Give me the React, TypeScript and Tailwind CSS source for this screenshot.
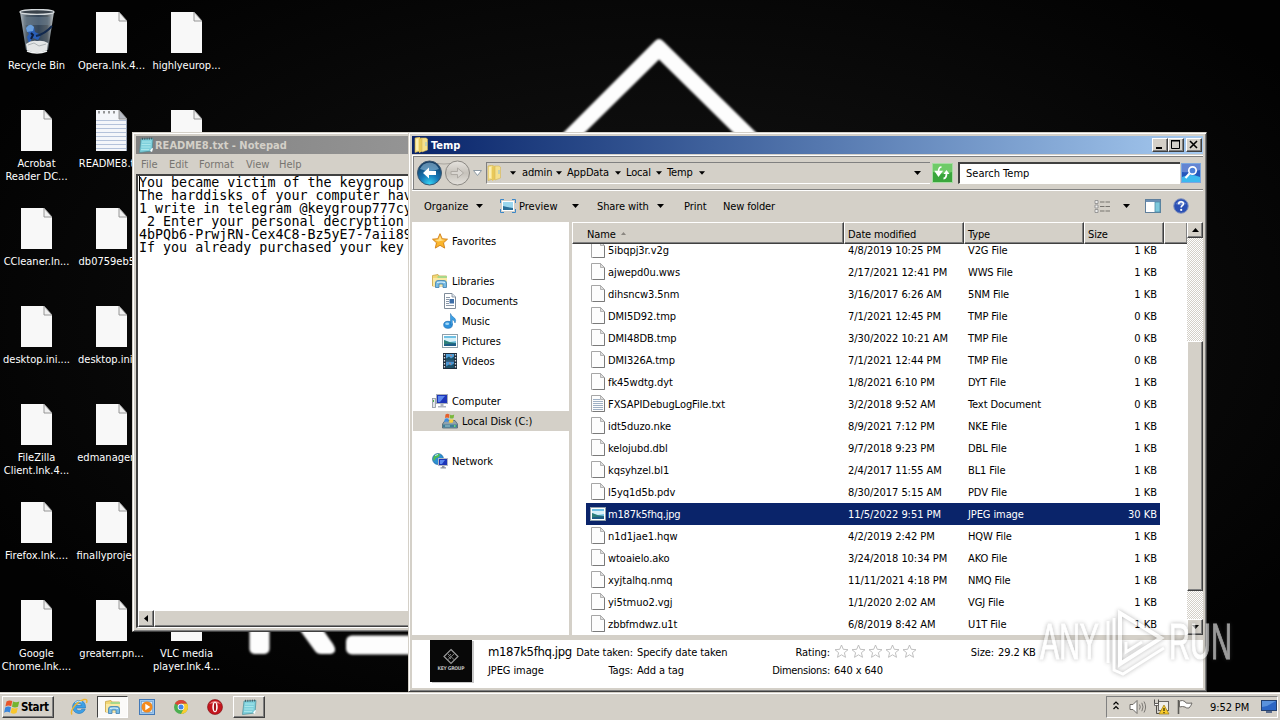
import type { ReactNode } from "react";

const raised =
  "border border-t-white border-l-white border-r-[#404040] border-b-[#404040] shadow-[inset_-1px_-1px_0_#808080]";

/* ---------- icons ---------- */

const PageIcon = ({ lined = false }: { lined?: boolean }) => (
  <svg width="31" height="41" viewBox="0 0 31 41" className="block shrink-0">
    <path d="M0 0H23L31 9V41H0Z" fill={lined ? "#f4f6fa" : "#f8f8f8"} />
    {lined && (
      <g>
        {[10, 14, 18, 22, 26, 30, 34, 38].map((y) => (
          <path key={y} d={`M0 ${y + 0.5}H31`} stroke="#b4c2da" />
        ))}
        {[3, 8, 13, 18].map((x) => (
          <path key={x} d={`M${x} 1v2.5`} stroke="#777" strokeWidth="1.5" />
        ))}
        <path d="M30.5 9V41" stroke="#9aa4b4" />
      </g>
    )}
    <path d="M23 0V9H31Z" fill={lined ? "#b8bcc4" : "#f0f0f0"} stroke="#8c8c8c" strokeWidth=".9" />
  </svg>
);

const BinIcon = () => (
  <svg width="36" height="45" viewBox="0 0 36 45" className="-mt-[3px] mb-[-1px] block shrink-0">
    <defs>
      <linearGradient id="bin" x1="0" x2="1">
        <stop offset="0" stopColor="#b4bdc4" />
        <stop offset=".2" stopColor="#52606c" />
        <stop offset=".55" stopColor="#34465a" />
        <stop offset=".8" stopColor="#545e66" />
        <stop offset="1" stopColor="#c2c8cc" />
      </linearGradient>
    </defs>
    <path d="M1 3L7 41Q18 47 29 41L35 3Z" fill="url(#bin)" />
    <path d="M5 8H31L30 16H6Z" fill="#6f8496" opacity=".5" />
    <ellipse cx="18" cy="3" rx="17" ry="2.4" fill="#39424b" stroke="#d5dadd" strokeWidth="1.4" />
    <path d="M7 20q3-5 8-2l1 5 6 3-3 5-5-2-4 5-2-6 2-3z" fill="#2a5fb8" />
    <path d="M7 19q4-6 8-1l-1 4-6 1z" fill="#6a9fdc" />
    <path d="M17 27q9-2 16-10" stroke="#12294e" strokeWidth="2" fill="none" />
    <path d="M12 24l2 2-2 4" stroke="#0f1d3a" strokeWidth="2" fill="none" />
    <path d="M7 35q5-4 11-3 6-1 11 2l-1 7q-10 5-20 0z" fill="#e4e6e6" />
    <path d="M9 36l6-2 5 3 7-2" stroke="#aeb4b6" fill="none" />
    <path d="M8 42q10 4 20 0" stroke="#f2f4f4" strokeWidth="1.5" fill="none" />
  </svg>
);

const SmallPage = ({ lined = false }: { lined?: boolean }) => (
  <svg width="14" height="17" viewBox="0 0 14 17" className="block shrink-0">
    <path d="M.5 .5H9.5L13.5 4.5V16.5H.5Z" fill="#fdfdfd" stroke="#a6a6a6" />
    <path d="M2 16.5H13.5V5" stroke="#7a7a7a" fill="none" />
    <path d="M9.5 .5V4.5H13.5Z" fill="#ddd" stroke="#a5a5a5" strokeWidth=".8" />
    {lined && <path d="M2 4.5H9M2 6.5H12M2 8.5H12M2 10.5H12M2 12.5H12M2 14.5H12" stroke="#9fb0c4" />}
  </svg>
);

const PictureIcon = () => (
  <svg width="16" height="14" viewBox="0 0 16 14" className="block shrink-0">
    <rect x=".5" y=".5" width="15" height="13" fill="#fff" stroke="#8fa0ab" />
    <rect x="2" y="2" width="12" height="10" fill="#6fc0e4" />
    <path d="M2 4h12v3l-6 1-6-2z" fill="#d8f1f8" />
    <path d="M2 6l5 2 7 1v3H2z" fill="#2d7f78" />
    <path d="M2 10.500q6-1.500 12-1v2.500H2z" fill="#1c5d88" />
  </svg>
);

const NotepadIcon = ({ size = 16 }: { size?: number }) => (
  <svg width={size} height={size} viewBox="0 0 16 16" className="block shrink-0">
    <path d="M3 2L15 1.5 14 14 1.5 15.5Z" fill="#7fd0dc" stroke="#4a8c98" strokeWidth=".7" />
    <path d="M4 5h9M3.6 7.5h9M3.4 10h9M3 12.5h8" stroke="#a8e6ea" />
    <path d="M4.5 .8v2M6.8 .8v2M9.1 .7v2M11.4 .6v2M13.6 .5v2" stroke="#3f5158" strokeWidth=".9" />
    <path d="M12 14l2-3 1 .5-1 3.5z" fill="#fff" />
  </svg>
);

const FolderIcon = () => (
  <svg width="14" height="16" viewBox="0 0 14 16" className="block shrink-0">
    <path d="M1 1l5-1v14l-5 1.500z" fill="#f7e28a" stroke="#c9a94a" strokeWidth=".6" />
    <path d="M5 2l3-1.500v14L5 16z" fill="#e9c95a" />
    <path d="M8 1h4l1.500 1v11L8 15z" fill="#f5e08c" stroke="#d4b558" strokeWidth=".6" />
    <path d="M3 2v11" stroke="#fffbe0" />
    <path d="M12 5v4" stroke="#8dc3dc" />
  </svg>
);

const LibraryIcon = ({ size = 16 }: { size?: number }) => (
  <svg width={size} height={size} viewBox="0 0 16 16" className="block shrink-0">
    <path d="M.5 2.500L6 1.500 7 3H14.500V13H.5Z" fill="#f3d774" stroke="#c8a548" strokeWidth=".8" />
    <path d="M5.500 3h9.500v3H5.500z" fill="#a8d88a" />
    <path d="M1 5h14v8H1z" fill="#fae9a4" />
    <path d="M3.500 14.500V10q0-2.500 2.500-2.500h6q2.500 0 2.500 2.500v4.500H11V11H7v3.500Z" fill="#79bce4" stroke="#3e7fae" strokeWidth=".8" />
    <path d="M5 9.500q4-1 8 0" stroke="#d9f1fc" fill="none" />
  </svg>
);

const StarIcon = () => (
  <svg width="16" height="16" viewBox="0 0 16 16" className="block">
    <path d="M8 .7l2.200 5 5.300.5-4 3.600 1.200 5.300L8 12.300l-4.700 2.800 1.200-5.300-4-3.600 5.300-.5z" fill="#fbb62c" stroke="#cf7d16" strokeWidth=".9" />
    <path d="M8 2.700l1.600 3.800 3.600.4-7 1.600-3.500-1.600 3.700-.4z" fill="#ffe08a" />
  </svg>
);

const DocIcon = () => (
  <svg width="16" height="16" viewBox="0 0 16 16" className="block">
    <path d="M2.500 .5H10L13.500 4V15.500H2.500Z" fill="#fff" stroke="#7f8b99" />
    <path d="M10 .5V4h3.500" fill="#dde4ec" stroke="#7f8b99" strokeWidth=".8" />
    <path d="M4 4.500h4M4 6.500h3M4 8.500h3M4 10.500h3M4 12.500h8" stroke="#8b98a8" />
    <rect x="7.500" y="6" width="4.500" height="4.500" fill="#3c6ea8" />
  </svg>
);

const MusicIcon = () => (
  <svg width="16" height="16" viewBox="0 0 16 16" className="block">
    <ellipse cx="6" cy="11.800" rx="4.300" ry="3.500" fill="#2f93dd" stroke="#1d6cb0" strokeWidth=".7" />
    <path d="M8.500 12V.5q1 3 4 4.500 2 2 .5 5-.5-3-2.700-3.500V12z" fill="#3ba0e6" stroke="#1d6cb0" strokeWidth=".5" />
    <ellipse cx="5.200" cy="10.800" rx="2" ry="1.200" fill="#a4d8f7" />
  </svg>
);

const VideoIcon = () => (
  <svg width="16" height="16" viewBox="0 0 16 16" className="block">
    <rect x="1" y="0" width="14" height="16" fill="#1f2d3c" />
    <path d="M2.500 1v15M13.500 1v15" stroke="#d8dee4" strokeWidth="1.300" strokeDasharray="1.500 1.500" />
    <rect x="4" y="1" width="8" height="6.500" fill="#4f9fd8" />
    <rect x="4" y="8.500" width="8" height="6.500" fill="#4a94d0" />
    <path d="M4 5.500l3-2 2 2 3-2v4H4zM4 13.500l3-2 2 1 3-2v4.500H4z" fill="#1c5068" />
    <path d="M8 2l2 1M7 10l2 1" stroke="#d47d6a" />
  </svg>
);

const ComputerIcon = () => (
  <svg width="16" height="16" viewBox="0 0 16 16" className="block">
    <rect x=".5" y="5.500" width="3" height="9" fill="#e3e6ea" stroke="#8b939c" strokeWidth=".8" />
    <path d="M1.500 7v2" stroke="#4fb04a" />
    <rect x="4.500" y="1.500" width="11" height="9" fill="#1d35b8" stroke="#aab0bb" />
    <path d="M6 3h7l-5 6H6z" fill="#5b86ee" />
    <path d="M8.500 11h3v2h2.500v1.500H6V13h2.500z" fill="#aeb4bd" />
  </svg>
);

const DiskIcon = () => (
  <svg width="16" height="16" viewBox="0 0 16 16" className="block">
    <path d="M.5 11L3 7.500h10l2.500 3.500v4H.5z" fill="#8fa2ae" stroke="#4c6472" strokeWidth=".8" />
    <path d="M1 11.500h14v3H1z" fill="#3f7f96" />
    <path d="M3 13h5" stroke="#c9dfe6" strokeWidth=".8" />
    <path d="M12 13h1.500" stroke="#7df26f" strokeWidth="1.500" />
    <path d="M3.500 1.500q2-1.500 4 0l-.5 3.500q-2-1-4 0z" fill="#e5602c" />
    <path d="M8.200 1.700q2 1 4-.3l-.6 3.600q-2 1-4 0z" fill="#7ab83c" />
    <path d="M2.800 5.700q2-1 4 0l-.5 3.300q-2-1-4 0z" fill="#3c8ee0" />
    <path d="M7.500 5.900q2 1 4 0l-.5 3.300q-2 1-4 0z" fill="#f8ce38" />
  </svg>
);

const NetworkIcon = () => (
  <svg width="16" height="16" viewBox="0 0 16 16" className="block">
    <circle cx="6" cy="6" r="5.500" fill="#2d8fd2" stroke="#1a5e97" strokeWidth=".6" />
    <path d="M2 3q3-3 6-2l-1 3-3 1-2 3-1-2zM7 7l3-1v4l-3 1z" fill="#4fbb55" />
    <path d="M3 2.500l3-1" stroke="#c6f0fc" />
    <rect x="6.500" y="5.500" width="9" height="7" fill="#1d35b8" stroke="#b5bac4" />
    <path d="M8 7h5l-3 4H8z" fill="#5d89f0" />
    <path d="M10 13h2.500v1.200H14v1.300H8.500v-1.300H10z" fill="#8d949e" />
  </svg>
);

const WindowsFlag = () => (
  <svg width="16" height="16" viewBox="0 0 16 16" className="block shrink-0">
    <path d="M2.500 2.500q3-2 5.800-.4L7.200 7.300q-2.800-1.500-5.800.2z" fill="#e8562a" />
    <path d="M9 2.500q3 1.500 6.300 0L14 7.700q-3 1.600-6 0z" fill="#74b42e" />
    <path d="M1.200 8.500q3-1.700 5.800-.2L5.900 13.500q-2.800-1.500-5.800.2z" fill="#3a86dc" />
    <path d="M7.800 8.700q3 1.600 6 0l-1.200 5.100q-3 1.700-6 0z" fill="#f8c62c" />
  </svg>
);

const IeIcon = () => (
  <svg width="18" height="18" viewBox="0 0 18 18" className="block">
    <path d="M9 2.500a6.500 6.500 0 1 0 6.200 8.700h-3.400q-1 1.600-2.800 1.600-2.600 0-2.800-2.800h9.300Q15.700 2.500 9 2.500zM6.300 7.500q.5-2.200 2.700-2.200t2.600 2.200z" fill="#3da0e6" stroke="#1e74ba" strokeWidth=".6" />
    <path d="M2 16.500C-.5 13 6 4 14 1.500q4-.8 2.500 3.500" fill="none" stroke="#efb52f" strokeWidth="1.400" />
    <path d="M5 4.500Q8.500 2 12 4" stroke="#bfe5fb" fill="none" />
  </svg>
);

const MediaIcon = () => (
  <svg width="16" height="16" viewBox="0 0 16 16" className="block">
    <rect x=".5" y=".5" width="15" height="15" fill="#9cc6ec" stroke="#4279b8" />
    <rect x="2.500" y="2.500" width="11" height="11" fill="#d5e8f8" stroke="#6fa0d2" strokeWidth=".7" />
    <circle cx="8" cy="8" r="5.500" fill="#f48a1c" />
    <path d="M6.300 4.800v6.400L11.300 8z" fill="#fff" />
  </svg>
);

const ChromeIcon = () => (
  <svg width="14" height="14" viewBox="0 0 14 14" className="block">
    <circle cx="7" cy="7" r="7" fill="#4caf50" />
    <path d="M7 7L.9 3.600A7 7 0 0 1 13.200 3.800H7z" fill="#dc4437" />
    <path d="M7 3.800h6.200A7 7 0 0 1 7 14L9.800 8.500z" fill="#fbcc2f" />
    <circle cx="7" cy="7" r="3.300" fill="#fff" />
    <circle cx="7" cy="7" r="2.500" fill="#4285e8" />
  </svg>
);

const OperaIcon = () => (
  <svg width="16" height="16" viewBox="0 0 16 16" className="block">
    <circle cx="8" cy="8" r="7.500" fill="#c4161e" stroke="#7c0d12" strokeWidth=".6" />
    <path d="M2 5q6-6 12 0-6-2-12 0z" fill="#ec8a8a" />
    <ellipse cx="8" cy="8" rx="2.700" ry="5.300" fill="#fff" />
    <ellipse cx="8" cy="8" rx="1.100" ry="4.300" fill="#a3141a" />
  </svg>
);

const Down = ({ w = 7 }: { w?: number }) => (
  <svg width={w} height="4" viewBox="0 0 7 4" className="block shrink-0">
    <path d="M0 0H7L3.500 4Z" fill="#000" />
  </svg>
);

/* ---------- desktop ---------- */

type Shortcut = { label: string[]; kind?: "bin" | "note" } | null;

const shortcuts: Shortcut[] = [
  { label: ["Recycle Bin"], kind: "bin" }, { label: ["Opera.lnk.4..."] }, { label: ["highlyeurop..."] },
  { label: ["Acrobat", "Reader DC..."] }, { label: ["README8.txt"], kind: "note" }, { label: [] },
  { label: ["CCleaner.ln..."] }, { label: ["db0759eb5..."] }, null,
  { label: ["desktop.ini...."] }, { label: ["desktop.ini...."] }, null,
  { label: ["FileZilla", "Client.lnk.4..."] }, { label: ["edmanager...."] }, null,
  { label: ["Firefox.lnk...."] }, { label: ["finallyprojec..."] }, null,
  { label: ["Google", "Chrome.lnk...."] }, { label: ["greaterr.pn..."] }, { label: ["VLC media", "player.lnk.4..."] },
];

const Wallpaper = () => (
  <svg width="1280" height="720" className="absolute inset-0">
    <defs>
      <radialGradient id="wall" cx=".52" cy=".45" r=".6">
        <stop offset="0" stopColor="#131313" />
        <stop offset=".45" stopColor="#0d0d0d" />
        <stop offset="1" stopColor="#020202" />
      </radialGradient>
      <filter id="soft"><feGaussianBlur stdDeviation=".8" /></filter>
    </defs>
    <rect width="1280" height="720" fill="url(#wall)" />
    <g filter="url(#soft)" fill="#fdfdfd">
      <path d="M542 154L655 41Q659 37 663 41L778 154H755L659 59.500 563 154Z" />
      <rect x="249.500" y="600" width="20" height="54" rx="5" />
      <path d="M278 600L315 651Q317 654 321 654H331Q338 652 333 644L302 600Z" />
      <rect x="346" y="635.500" width="90" height="19" rx="6" />
    </g>
  </svg>
);

const Desktop = () => (
  <div className="absolute top-0 -left-[1px] grid auto-rows-[98px] grid-cols-[75px_75px_75px] text-white">
    {shortcuts.map((s, i) => (
      <div key={i} className="flex flex-col items-center pt-[12px]">
        {s && (
          <>
            {s.kind === "bin" ? <BinIcon /> : <PageIcon lined={s.kind === "note"} />}
            <div className="mt-[6px] text-center whitespace-nowrap">
              {s.label.map((l) => <div key={l}>{l}</div>)}
            </div>
          </>
        )}
      </div>
    ))}
  </div>
);

/* ---------- windows ---------- */

const Frame = ({ place, children }: { place: string; children: ReactNode }) => (
  <div className={`absolute flex flex-col border border-t-[#d4d0c8] border-l-[#d4d0c8] border-r-[#404040] border-b-[#404040] bg-[#d4d0c8] p-[3px] shadow-[inset_1px_1px_0_#fff,inset_-1px_-1px_0_#808080] ${place}`}>
    {children}
  </div>
);

const noteLines = [
  "You became victim of the keygroup ",
  "The harddisks of your computer have",
  "1 write in telegram @keygroup777cyber",
  " 2 Enter your personal decryption ",
  "4bPQb6-PrwjRN-Cex4C8-Bz5yE7-7aii89",
  "If you already purchased your key ",
];

const Notepad = () => (
  <Frame place="left-[132px] top-[132px] h-[500px] w-[700px]">
    <div className="flex h-[18px] shrink-0 items-center gap-[1px] bg-linear-to-r from-[#808080] to-[#b4b4b4] pl-[2px] font-bold text-[#d4d0c8]">
      <NotepadIcon />
      README8.txt - Notepad
    </div>
    <div className="flex h-[20px] shrink-0 items-center pl-[5px] text-[#777571]">
      <span className="w-[28px]">File</span>
      <span className="w-[30px]">Edit</span>
      <span className="w-[47px]">Format</span>
      <span className="w-[33px]">View</span>
      <span>Help</span>
    </div>
    <div className="flex min-h-0 flex-1 flex-col border-t-2 border-l-2 border-b border-[#404040] border-b-white bg-white">
      <div className="flex min-h-0 flex-1 overflow-hidden pl-[1px] font-['DejaVu_Sans_Mono',monospace] text-[13.33px] leading-[13px] whitespace-pre text-black">
        <div className="-mr-px h-[15px] w-px shrink-0 bg-black" />
        <div>{noteLines.map((l) => <div key={l}>{l}</div>)}</div>
      </div>
      <div className="flex h-[17px] shrink-0 bg-[#d4d0c8]">
        <div className={`flex w-[16px] items-center justify-center bg-[#d4d0c8] ${raised}`}>
          <svg width="4" height="7"><path d="M4 0V7L0 3.500Z" /></svg>
        </div>
        <div className={`w-[600px] bg-[#d4d0c8] ${raised}`} />
      </div>
    </div>
  </Frame>
);

const files = [
  ["5ibqpj3r.v2g", "4/8/2019 10:25 PM", "V2G File", "1 KB"],
  ["ajwepd0u.wws", "2/17/2021 12:41 PM", "WWS File", "1 KB"],
  ["dihsncw3.5nm", "3/16/2017 6:26 AM", "5NM File", "1 KB"],
  ["DMI5D92.tmp", "7/1/2021 12:45 PM", "TMP File", "0 KB"],
  ["DMI48DB.tmp", "3/30/2022 10:21 AM", "TMP File", "0 KB"],
  ["DMI326A.tmp", "7/1/2021 12:44 PM", "TMP File", "0 KB"],
  ["fk45wdtg.dyt", "1/8/2021 6:10 PM", "DYT File", "1 KB"],
  ["FXSAPIDebugLogFile.txt", "3/2/2018 9:52 AM", "Text Document", "0 KB"],
  ["idt5duzo.nke", "8/9/2021 7:12 PM", "NKE File", "1 KB"],
  ["kelojubd.dbl", "9/7/2018 9:23 PM", "DBL File", "1 KB"],
  ["kqsyhzel.bl1", "2/4/2017 11:55 AM", "BL1 File", "1 KB"],
  ["l5yq1d5b.pdv", "8/30/2017 5:15 AM", "PDV File", "1 KB"],
  ["m187k5fhq.jpg", "11/5/2022 9:51 PM", "JPEG image", "30 KB"],
  ["n1d1jae1.hqw", "4/2/2019 2:42 PM", "HQW File", "1 KB"],
  ["wtoaielo.ako", "3/24/2018 10:34 PM", "AKO File", "1 KB"],
  ["xyjtalhq.nmq", "11/11/2021 4:18 PM", "NMQ File", "1 KB"],
  ["yi5tmuo2.vgj", "1/1/2020 2:02 AM", "VGJ File", "1 KB"],
  ["zbbfmdwz.u1t", "6/8/2019 8:42 AM", "U1T File", "1 KB"],
];

const NavItem = ({ icon, text, child, active }: { icon: ReactNode; text: string; child?: boolean; active?: boolean }) => (
  <div className={`ml-[1px] flex h-[20px] items-center gap-[4px] tracking-[-0.05px] ${child ? "pl-[29px]" : "pl-[19px]"} ${active ? "bg-[#d4d0c8]" : ""}`}>
    {icon}
    {text}
  </div>
);

const Column = ({ text, w, sorted }: { text: string; w: string; sorted?: boolean }) => (
  <div className={`flex h-[22px] shrink-0 items-center gap-[5px] bg-[#d4d0c8] pt-[2px] tracking-[-0.15px] ${raised} ${w}`}>
    {text}
    {sorted && <svg width="5" height="3" className="mb-[2px]"><path d="M2.500 0L5 3H0Z" fill="#8a8680" /></svg>}
  </div>
);

const TitleButton = ({ children }: { children: ReactNode }) => (
  <div className={`h-[14px] w-[16px] bg-[#d4d0c8] ${raised}`}>
    <svg width="14" height="12" className="block" stroke="#000" fill="none">{children}</svg>
  </div>
);

const Crumb = ({ text, w }: { text: string; w: string }) => (
  <div className={`flex shrink-0 items-center justify-between tracking-[-0.15px] ${w}`}>
    <span>{text}</span>
    <Down w={6} />
  </div>
);

const AddressBand = () => (
  <div className="flex h-[35px] shrink-0 items-center border-t border-l border-t-white border-l-white border-b border-b-[#808080] shadow-[inset_1px_1px_0_#808080,0_1px_0_#fff]">
    <svg width="70" height="28" viewBox="0 0 70 28" className="ml-[3px] block shrink-0">
      <defs>
        <radialGradient id="back" cx=".5" cy=".95" r=".9">
          <stop offset="0" stopColor="#35d3f4" />
          <stop offset=".45" stopColor="#1676b4" />
          <stop offset="1" stopColor="#12395f" />
        </radialGradient>
        <linearGradient id="fwd" x2="0" y2="1">
          <stop offset="0" stopColor="#e6e3de" />
          <stop offset=".5" stopColor="#c6c2bb" />
          <stop offset="1" stopColor="#e4e1dc" />
        </linearGradient>
      </defs>
      <path d="M14 3Q28 7 42 3" stroke="#aaa69f" fill="none" />
      <circle cx="13.500" cy="14" r="12" fill="url(#back)" stroke="#3b5670" />
      <path d="M4 10Q7 3.500 13.500 3.500T23 10Q14 14 4 10z" fill="#9fc8e4" opacity=".55" />
      <path d="M7 14L13 8.500V12H20V16H13V19.500Z" fill="#fff" />
      <circle cx="41.500" cy="14" r="12" fill="url(#fwd)" stroke="#8b8883" />
      <path d="M35 12.500H41.500V9L47.500 14 41.500 19V15.500H35Z" fill="#d9d6d1" stroke="#aeaaa4" />
      <path d="M57.500 11.500H65.500L61.500 16.500Z" fill="#fff" stroke="#8d9aa4" />
    </svg>
    <div className="flex h-[22px] w-[444px] shrink-0 items-center border-t border-l border-b border-[#808080] border-b-white">
      <FolderIcon />
      <div className="flex w-[16px] shrink-0 justify-end pr-px"><Down w={6} /></div>
      <div className="ml-[5px] flex gap-[5px]">
        <Crumb text="admin" w="w-[40px]" />
        <Crumb text="AppData" w="w-[54px]" />
        <Crumb text="Local" w="w-[36px]" />
        <Crumb text="Temp" w="w-[38px]" />
      </div>
      <div className="mr-[9px] ml-auto"><Down /></div>
    </div>
    <svg width="21" height="20" viewBox="0 0 21 20" className="ml-[2px] block shrink-0">
      <rect x=".5" y=".5" width="20" height="19" fill="#3aa63c" stroke="#a6dca2" />
      <path d="M1 1h19v8Q10 12 1 9z" fill="#6fcb68" />
      <path d="M9.500 4Q6.500 4 6.500 9M3.800 8.500L6.500 12.500 9.500 8.500z" fill="none" stroke="#fff" strokeWidth="1.600" />
      <path d="M4 8.500h5.500L6.700 12zM11.500 11h6L14.500 7z" fill="#fff" />
      <path d="M14.500 10Q14.500 15.500 11.500 15.500" fill="none" stroke="#fff" strokeWidth="1.800" />
    </svg>
    <div className="ml-[5px] flex h-[22px] w-[222px] shrink-0 items-center border-t-2 border-l-2 border-b border-[#404040] border-b-white bg-white pl-[6px]">
      Search Temp
    </div>
    <svg width="20" height="20" viewBox="0 0 20 20" className="ml-[1px] block shrink-0">
      <rect x=".5" y=".5" width="19" height="19" fill="#2457bc" stroke="#7ba6de" />
      <path d="M1 14Q10 10 19 14V19H1z" fill="#3cb9ee" />
      <path d="M1 1h18v6Q10 10 1 9z" fill="#6485d2" />
      <circle cx="11.500" cy="7.500" r="3.700" fill="#4b7fd8" stroke="#fff" strokeWidth="1.700" />
      <path d="M8.500 10.500L4.500 15" stroke="#fff" strokeWidth="2.200" />
    </svg>
  </div>
);

const CommandBar = () => (
  <div className="flex h-[32px] shrink-0 items-center pl-[12px]">
    <span className="w-[52px]">Organize</span>
    <div className="w-[24px]"><Down /></div>
    <svg width="16" height="14" viewBox="0 0 16 14" className="mr-[3px] block">
      <path d="M.5 4V.5H4M12 .5h3.500V4M15.500 10v3.500H12M4 13.500H.5V10" fill="none" stroke="#3b87c8" />
      <rect x="2.500" y="2.500" width="11" height="9" fill="#9bd7ee" stroke="#fff" />
      <path d="M3 7l4 1 6 1v2H3z" fill="#2b6f98" />
    </svg>
    <span className="w-[53px]">Preview</span>
    <div className="w-[25px]"><Down /></div>
    <span className="w-[60px] tracking-[-0.1px]">Share with</span>
    <div className="w-[27px]"><Down /></div>
    <span className="w-[39px]">Print</span>
    <span className="tracking-[-0.15px]">New folder</span>
    <div className="mr-[14px] ml-auto flex items-center">
      <svg width="16" height="13" viewBox="0 0 16 13">
        <path d="M1 .5h3v3H1zM1 5h3v3H1zM1 9.500h3v3H1z" fill="#eee" stroke="#888" strokeWidth=".8" />
        <path d="M6 2h4.500M11.500 2H16M6 6.500h4.500M11.500 6.500H16M6 11h4.500M11.500 11H16" stroke="#77746f" />
      </svg>
      <div className="mr-[15px] ml-[13px]"><Down /></div>
      <svg width="16" height="14" viewBox="0 0 16 14">
        <rect x=".5" y=".5" width="15" height="13" fill="#fff" stroke="#5f7f9c" />
        <path d="M1 2h14" stroke="#6c8fb4" strokeWidth="2" />
        <rect x="10" y="3" width="5" height="10" fill="#7ec8dc" stroke="#4f8ca8" strokeWidth=".8" />
      </svg>
      <svg width="16" height="16" viewBox="0 0 16 16" className="ml-[12px]">
        <circle cx="8" cy="8" r="7.300" fill="#2b50b4" stroke="#8796bd" />
        <path d="M2.500 6Q8-1 13.500 6 8 8 2.500 6z" fill="#6482cc" />
        <path d="M5.700 6.200q0-2.400 2.400-2.400t2.300 2q0 1.200-1.300 1.900-.9.500-.9 1.700" stroke="#fff" strokeWidth="1.600" fill="none" />
        <circle cx="8.200" cy="11.900" r="1.100" fill="#fff" />
      </svg>
    </div>
  </div>
);

const Explorer = () => (
  <Frame place="left-[408px] top-[132px] h-[560px] w-[799px]">
    <div className="flex h-[18px] shrink-0 items-center bg-linear-to-r from-[#0a246a] to-[#a6caf0] pr-[1px] pl-[2px] font-bold text-white">
      <FolderIcon />
      <span className="ml-[3px]">Temp</span>
      <div className="ml-auto flex">
        <TitleButton><path d="M3 9h6" strokeWidth="2" /></TitleButton>
        <TitleButton><path d="M2.500 2v7.500h8V2M2 2h9" /><path d="M2 1.500h9" /></TitleButton>
        <div className="ml-[2px]">
          <TitleButton><path d="M3 2l7 7M10 2l-7 7" strokeWidth="1.600" /></TitleButton>
        </div>
      </div>
    </div>
    <div className="h-px shrink-0" />
    <AddressBand />
    <CommandBar />
    <div className="flex h-[413px] shrink-0">
      <div className="w-[157px] shrink-0 bg-white pt-[9px]">
        <NavItem icon={<StarIcon />} text="Favorites" />
        <div className="h-[20px]" />
        <NavItem icon={<LibraryIcon />} text="Libraries" />
        <NavItem child icon={<DocIcon />} text="Documents" />
        <NavItem child icon={<MusicIcon />} text="Music" />
        <NavItem child icon={<PictureIcon />} text="Pictures" />
        <NavItem child icon={<VideoIcon />} text="Videos" />
        <div className="h-[20px]" />
        <NavItem icon={<ComputerIcon />} text="Computer" />
        <NavItem child active icon={<DiskIcon />} text="Local Disk (C:)" />
        <div className="h-[20px]" />
        <NavItem icon={<NetworkIcon />} text="Network" />
      </div>
      <div className="w-[3px] shrink-0 bg-[#d4d0c8]" />
      <div className="flex min-w-0 flex-1 flex-col overflow-hidden bg-white">
        <div className="flex h-[22px] shrink-0">
          <Column text="Name" w="w-[272px] pl-[14px]" sorted />
          <Column text="Date modified" w="w-[120px] pl-[3px]" />
          <Column text="Type" w="w-[120px] pl-[3px]" />
          <Column text="Size" w="w-[80px] pl-[3px]" />
          <Column text="" w="w-[24px]" />
        </div>
        <div className="flex min-h-0 flex-1 flex-col justify-end overflow-hidden">
          {files.map(([name, date, type, size]) => {
            const picked = name === "m187k5fhq.jpg";
            return (
              <div key={name} className={`ml-[14px] flex h-[22px] w-[574px] shrink-0 items-center whitespace-nowrap ${picked ? "bg-[#0a246a] text-white" : ""}`}>
                <div className="flex w-[22px] shrink-0 justify-center pr-px pb-px pl-[3px]">
                  {picked ? <PictureIcon /> : <SmallPage lined={name.endsWith(".txt")} />}
                </div>
                <span className={`w-[240px] shrink-0 ${picked ? "tracking-[-0.2px]" : "tracking-[-0.05px]"}`}>{name}</span>
                <span className="w-[120px] shrink-0 tracking-[-0.05px]">{date}</span>
                <span className="w-[120px] shrink-0 tracking-[-0.1px]">{type}</span>
                <span className="ml-auto pr-[3px]">{size}</span>
              </div>
            );
          })}
        </div>
      </div>
      <div className="flex w-[16px] shrink-0 flex-col bg-[repeating-conic-gradient(#fff_0_25%,#d4d0c8_0_50%)] bg-[length:2px_2px]">
        <div className={`flex h-[16px] items-center justify-center bg-[#d4d0c8] ${raised}`}>
          <svg width="7" height="4"><path d="M0 4H7L3.500 0Z" /></svg>
        </div>
        <div className={`mt-[103px] h-[250px] bg-[#d4d0c8] ${raised}`} />
        <div className={`mt-auto flex h-[16px] items-center justify-center bg-[#d4d0c8] ${raised}`}><Down /></div>
      </div>
    </div>
    <div className="h-[5px] shrink-0 bg-[#d4d0c8]" />
    <div className="flex h-[48px] shrink-0 bg-white">
      <svg width="44" height="44" viewBox="0 0 44 44" className="ml-[18px] block shrink-0">
        <rect x="2" y="1" width="42" height="42" fill="#c8c8c8" />
        <rect width="42" height="42" fill="#080808" />
        <path d="M21 9.500L28 16.500 21 23.500 14 16.500Z" fill="none" stroke="#999" strokeWidth="1.200" />
        <path d="M18 14l6 5.500M18 19.500l6-5.500M21 14l-2.500 2.500 2.500 2.500" stroke="#888" strokeWidth=".9" fill="none" />
        <text x="7.500" y="30" fill="#bbb" fontSize="5" fontWeight="bold" textLength="27">KEY GROUP</text>
      </svg>
      <div className="ml-[14px] flex w-[84px] shrink-0 flex-col gap-[4px] pt-[4px]">
        <span className="text-[13px] leading-[16px] tracking-[-0.38px] whitespace-nowrap">m187k5fhq.jpg</span>
        <span className="leading-[13px] tracking-[-0.1px]">JPEG image</span>
      </div>
      <div className="grid shrink-0 auto-rows-[18px] grid-cols-[61px_116px_73px_116px_40px_50px] items-center gap-x-[4px] pt-[3px] tracking-[-0.1px] whitespace-nowrap [&>*:nth-child(odd)]:text-right">
        <span>Date taken:</span><span>Specify date taken</span>
        <span>Rating:</span>
        <svg width="84" height="14" viewBox="0 0 84 14" className="-mt-[3px]">
          {[0, 17, 34, 51, 68].map((x) => (
            <path key={x} transform={`translate(${x} 0)`} d="M7.500 1l1.800 4.300 4.700.4-3.600 3 1.100 4.600-4-2.500-4 2.500 1.100-4.600-3.600-3 4.700-.4z" fill="#fff" stroke="#b9b9b9" strokeWidth=".9" />
          ))}
        </svg>
        <span>Size:</span><span>29.2 KB</span>
        <span>Tags:</span><span>Add a tag</span>
        <span className="tracking-[-0.3px]">Dimensions:</span><span>640 x 640</span>
      </div>
    </div>
  </Frame>
);

/* ---------- taskbar ---------- */

const Taskbar = () => (
  <div className="absolute inset-x-0 bottom-0 flex h-[28px] border-t border-[#d4d0c8] bg-[#d4d0c8] pt-[3px] shadow-[inset_0_1px_0_#fff]">
    <div className={`ml-[2px] flex h-[22px] w-[52px] items-center gap-px pl-[1px] text-[11.5px] font-bold tracking-[-0.4px] ${raised}`}>
      <WindowsFlag />
      Start
    </div>
    <div className="ml-[16px] flex h-[22px] items-center">
      <IeIcon />
      <div className="ml-[9px] flex h-[22px] w-[31px] items-center justify-center border border-t-[#404040] border-l-[#404040] border-r-white border-b-white bg-[#fbfaf8]">
        <LibraryIcon />
      </div>
      <div className="ml-[11px]"><MediaIcon /></div>
      <div className="ml-[19px]"><ChromeIcon /></div>
      <div className="ml-[19px]"><OperaIcon /></div>
      <div className={`ml-[10px] flex h-[22px] w-[32px] items-center justify-center ${raised}`}>
        <NotepadIcon size={16} />
      </div>
    </div>
    <div className="mr-[2px] ml-auto flex h-[22px] w-[172px] items-center border border-t-[#808080] border-l-[#808080] border-r-white border-b-white pl-[6px]">
      <svg width="6" height="9" viewBox="0 0 6 9" className="-mt-[4px]" fill="none" stroke="#000" strokeWidth="1.200"><path d="M.5 3.500L3 1l2.500 2.500M.5 8L3 5.500 5.500 8" /></svg>
      <svg width="18" height="16" viewBox="0 0 18 16" className="ml-[10px]">
        <path d="M1 5.500h3L8 1.500v13L4 10.500H1z" fill="#fff" stroke="#6d6a66" />
        <path d="M10.500 5.500q1.500 2.500 0 5M12.800 3.800q2.500 4.200 0 8.400M15 2.500q3.200 5.500 0 11" fill="none" stroke="#7a7773" />
      </svg>
      <svg width="17" height="16" viewBox="0 0 17 16" className="ml-[6px]">
        <rect x="5.500" y="2.500" width="10" height="9" fill="#efeeea" stroke="#6a6864" />
        <path d="M1.500 .5v4h4v-4M3.500 5v9.500h6" fill="none" stroke="#4f4d4a" />
        <path d="M1.500 4.500h4v2h-4z" fill="#fff" stroke="#4f4d4a" strokeWidth=".8" />
        <path d="M11 6l5 9H6z" fill="#f9cb2a" stroke="#9a7a14" strokeWidth=".7" />
        <path d="M11 9v3M11 13v1.200" stroke="#000" />
      </svg>
      <svg width="16" height="16" viewBox="0 0 16 16" className="ml-[7px]">
        <path d="M1.500 1v14" stroke="#5d5b57" strokeWidth="1.600" />
        <path d="M2.500 2q3-1.200 5.500.5 0 .8 1 1.500 3 .5 6 0-1 3-3 5-2.500.5-4-1-2.500-1-5.500 0z" fill="#fff" stroke="#6d6a66" />
      </svg>
      <span className="ml-[17px] whitespace-nowrap tracking-[-0.1px]">9:52 PM</span>
      <svg width="16" height="14" viewBox="0 0 16 14" className="ml-auto">
        <rect x=".5" y=".5" width="15" height="10" fill="#2c66c4" stroke="#23406e" />
        <path d="M1 1h14l-9 5-5 1z" fill="#5a92dc" />
        <path d="M5 11h6v2H5z" fill="#57698a" />
      </svg>
    </div>
  </div>
);

const Watermark = () => (
  <svg width="210" height="80" viewBox="0 0 210 80" className="absolute top-[602px] left-[1035px] opacity-60 drop-shadow-[0_0_2px_rgba(80,80,80,0.7)]">
    <g fill="#fff" stroke="#fff" strokeWidth="1" className="font-['Liberation_Sans_Narrow','Liberation_Sans',sans-serif] text-[50px]">
      <text x="5" y="57" textLength="59" lengthAdjust="spacingAndGlyphs">ANY</text>
      <text x="134" y="57" textLength="63" lengthAdjust="spacingAndGlyphs">RUN</text>
    </g>
    <g fill="none" stroke="#fff" strokeWidth="4">
      <path d="M85 11L126 36 85 62Z" />
      <path d="M73 19V61M79 16V68L88 72 129 46" strokeWidth="3" />
      <path d="M91 40V50L107 40" strokeWidth="3" />
    </g>
  </svg>
);

export default function App() {
  return (
    <div className="relative h-[720px] w-[1280px] overflow-hidden bg-black font-['DejaVu_Sans_Condensed','DejaVu_Sans',sans-serif] text-[11px] leading-[13px] text-black">
      <Wallpaper />
      <Desktop />
      <Notepad />
      <Explorer />
      <Taskbar />
      <Watermark />
    </div>
  );
}
